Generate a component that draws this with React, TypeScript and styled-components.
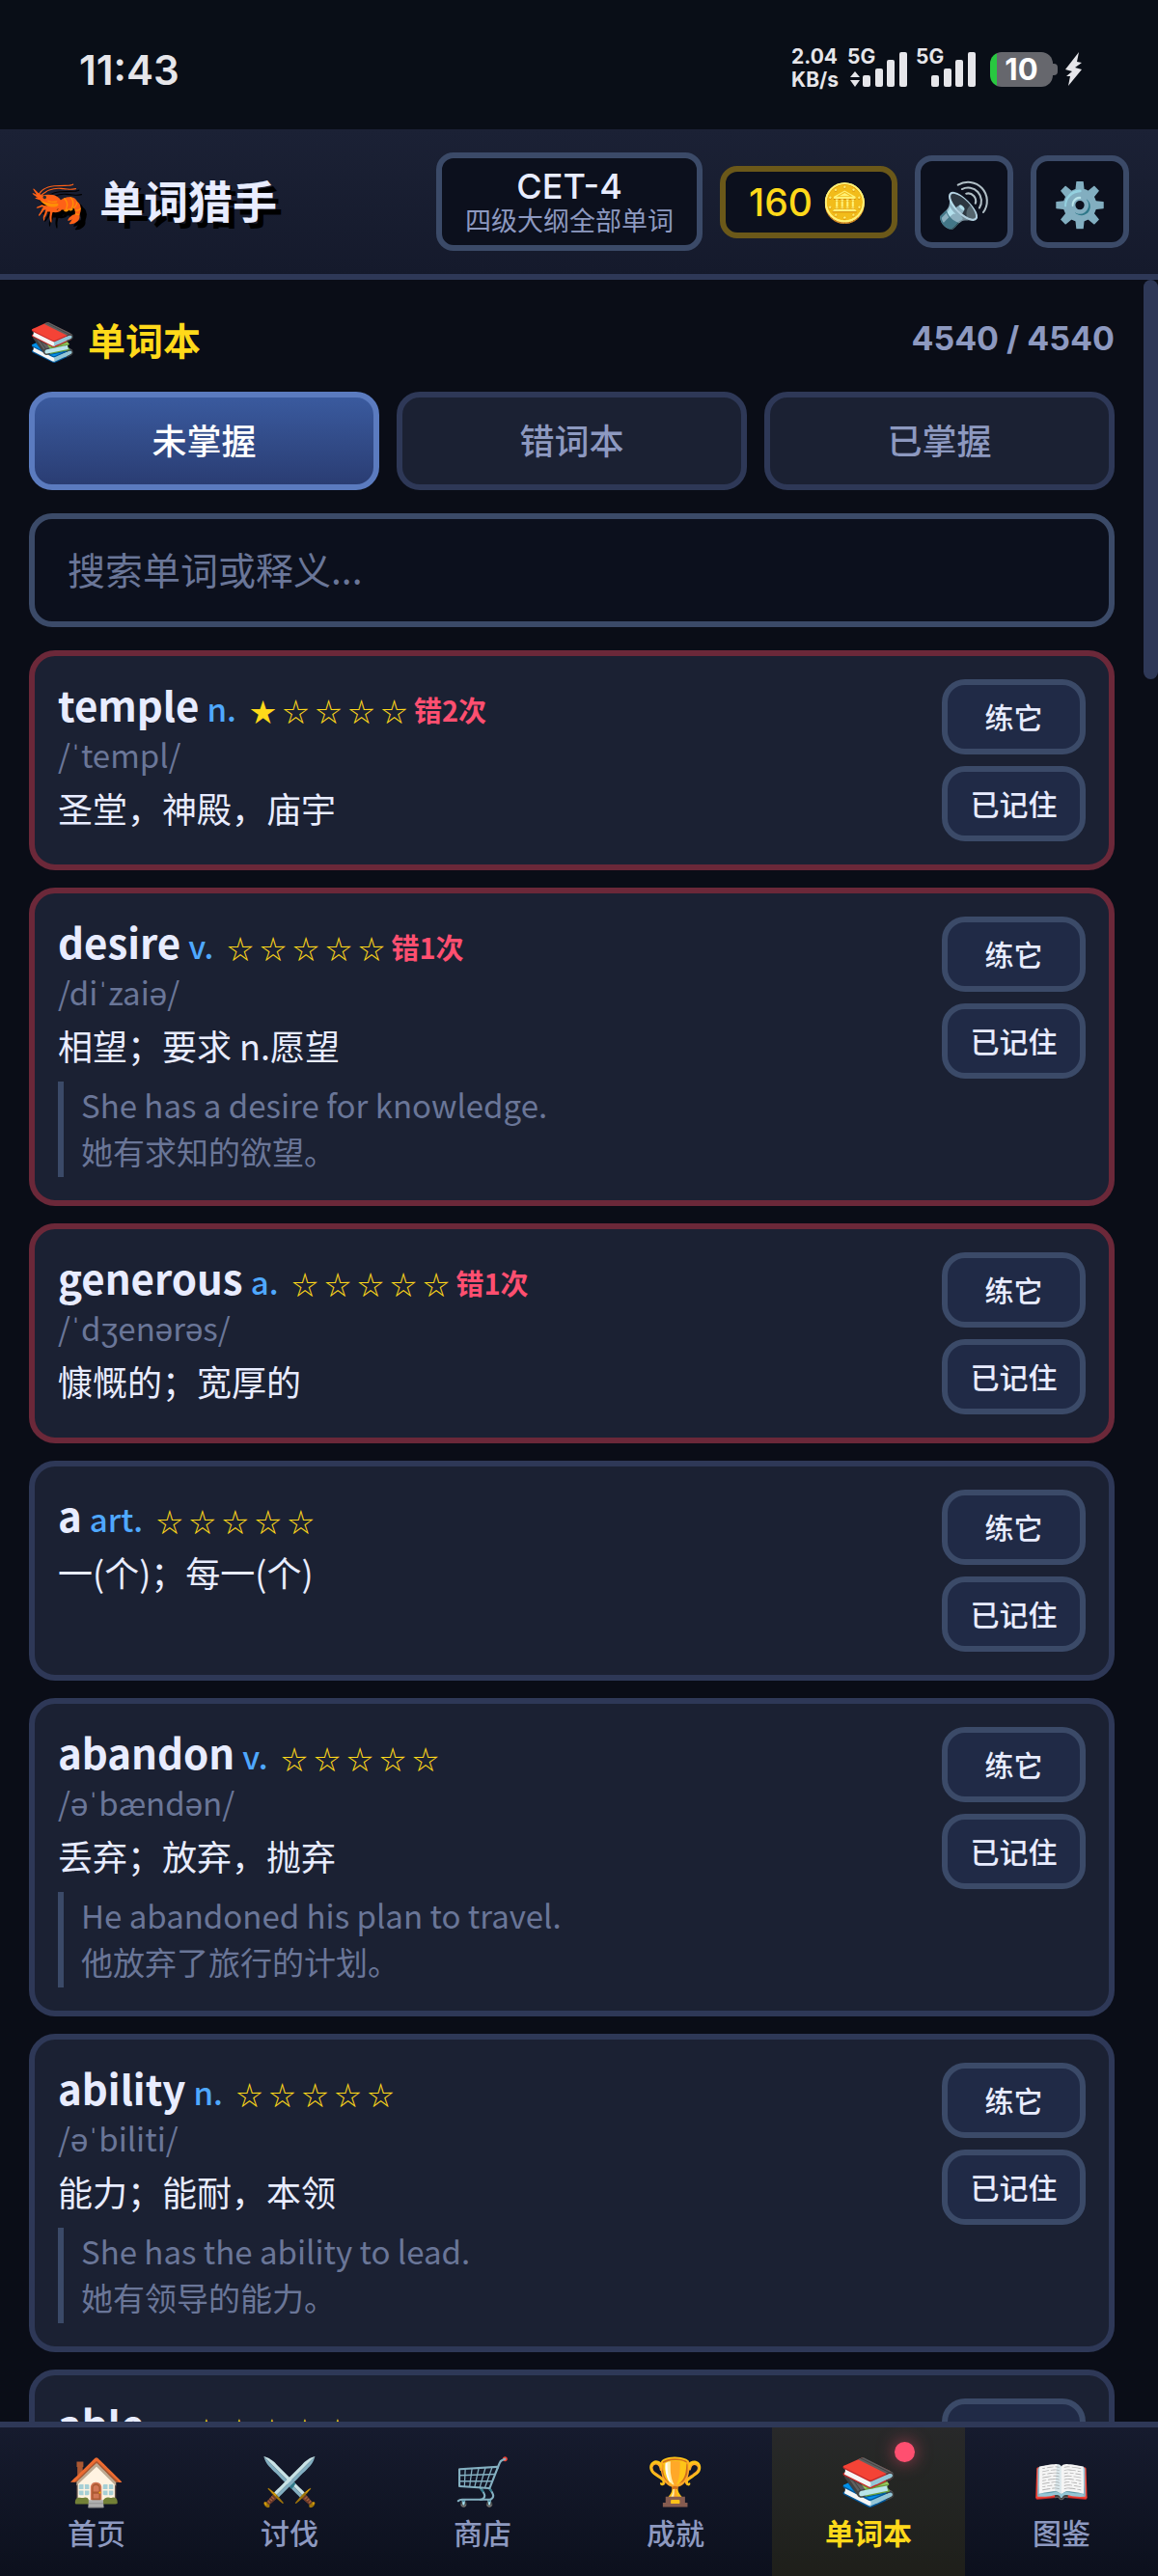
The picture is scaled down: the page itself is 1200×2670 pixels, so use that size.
import React, { useState } from "react";
import { createGlobalStyle, styled } from "styled-components";

interface Word {
  word: string;
  pos: string;
  level: number;
  wrong?: number;
  phonetic?: string;
  meaning?: string;
  example?: string;
  exampleCn?: string;
}

const words: Word[] = [
  {
    word: "temple",
    pos: "n.",
    level: 1,
    wrong: 2,
    phonetic: "/ˈtempl/",
    meaning: "圣堂，神殿，庙宇",
  },
  {
    word: "desire",
    pos: "v.",
    level: 0,
    wrong: 1,
    phonetic: "/diˈzaiə/",
    meaning: "相望；要求 n.愿望",
    example: "She has a desire for knowledge.",
    exampleCn: "她有求知的欲望。",
  },
  {
    word: "generous",
    pos: "a.",
    level: 0,
    wrong: 1,
    phonetic: "/ˈdʒenərəs/",
    meaning: "慷慨的；宽厚的",
  },
  { word: "a", pos: "art.", level: 0, meaning: "一(个)；每一(个)" },
  {
    word: "abandon",
    pos: "v.",
    level: 0,
    phonetic: "/əˈbændən/",
    meaning: "丢弃；放弃，抛弃",
    example: "He abandoned his plan to travel.",
    exampleCn: "他放弃了旅行的计划。",
  },
  {
    word: "ability",
    pos: "n.",
    level: 0,
    phonetic: "/əˈbiliti/",
    meaning: "能力；能耐，本领",
    example: "She has the ability to lead.",
    exampleCn: "她有领导的能力。",
  },
  { word: "able", pos: "a.", level: 0 },
];

const tabs = ["未掌握", "错词本", "已掌握"];

const menus = [
  { icon: "🏠", name: "首页" },
  { icon: "⚔️", name: "讨伐" },
  { icon: "🛒", name: "商店" },
  { icon: "🏆", name: "成就" },
  { icon: "📚", name: "单词本", dot: true },
  { icon: "📖", name: "图鉴" },
];

const SignalBars = () => (
  <svg width="46" height="36" viewBox="0 0 46 36" fill="#e6e6ea">
    <rect x="0" y="24" width="8" height="12" rx="2" />
    <rect x="13" y="17" width="8" height="19" rx="2" />
    <rect x="25" y="8" width="8" height="28" rx="2" />
    <rect x="38" y="0" width="8" height="36" rx="2" />
  </svg>
);

const WordCard: React.FC<{ item: Word }> = ({ item }) => {
  return (
    <Card $wrong={!!item.wrong}>
      <WordInfo>
        <WordLine>
          <WordText>{item.word}</WordText>
          <Pos>{item.pos}</Pos>
          <Stars>
            {[1, 2, 3, 4, 5].map((n) => (
              <span key={n}>{n <= item.level ? "★" : "☆"}</span>
            ))}
          </Stars>
          {item.wrong && <WrongCount>错{item.wrong}次</WrongCount>}
        </WordLine>
        {item.phonetic && <Phonetic>{item.phonetic}</Phonetic>}
        {item.meaning && <Meaning>{item.meaning}</Meaning>}
        {item.example && (
          <Example>
            <p>{item.example}</p>
            <p>{item.exampleCn}</p>
          </Example>
        )}
      </WordInfo>
      <CardActions>
        <ActionBt>练它</ActionBt>
        <ActionBt>已记住</ActionBt>
      </CardActions>
    </Card>
  );
};

const App: React.FC = () => {
  const [tab, setTab] = useState<string>("未掌握");
  const [menu, setMenu] = useState<string>("单词本");
  const [keyword, setKeyword] = useState<string>("");

  return (
    <Screen>
      <GlobalStyle />
      <StatusBar>
        <Time>11:43</Time>
        <StatusIcons>
          <NetSpeed>
            <span>2.04</span>
            <span>KB/s</span>
          </NetSpeed>
          <Signal>
            <SignalLabel>5G</SignalLabel>
            <svg width="10" height="16" viewBox="0 0 10 16" fill="#e6e6ea">
              <path d="M5 0 L10 6 H0 Z M5 16 L0 9 H10 Z" />
            </svg>
            <SignalBars />
          </Signal>
          <Signal>
            <SignalLabel>5G</SignalLabel>
            <SignalBars />
          </Signal>
          <Battery>10</Battery>
          <svg width="18" height="36" viewBox="0 0 18 36" fill="#e6e6ea">
            <path d="M14 0 L0 18 L7 20 L1 25 H5 L3 35 L17 18 L10 16 L17 11 L12 10 Z" />
          </svg>
        </StatusIcons>
      </StatusBar>

      <Header>
        <Title>
          <span>🦐</span>
          <span>单词猎手</span>
        </Title>
        <BookBt>
          <BookName>CET-4</BookName>
          <BookDesc>四级大纲全部单词</BookDesc>
        </BookBt>
        <Coin>
          <span>160</span>
          <span>🪙</span>
        </Coin>
        <IconBt aria-label="声音">🔊</IconBt>
        <IconBt aria-label="设置">⚙️</IconBt>
      </Header>

      <Body>
        <Main>
          <Heading>
            <HeadingTitle>
              <span>📚</span>
              <span>单词本</span>
            </HeadingTitle>
            <Count>4540 / 4540</Count>
          </Heading>
          <TabList>
            {tabs.map((name) => (
              <TabBt
                key={name}
                $active={tab === name}
                onClick={() => setTab(name)}
              >
                {name}
              </TabBt>
            ))}
          </TabList>
          <SearchInput
            type="text"
            aria-label="搜索单词或释义"
            placeholder="搜索单词或释义..."
            value={keyword}
            onChange={(e) => setKeyword(e.target.value)}
          />
          <CardList>
            {words.map((item) => (
              <WordCard key={item.word} item={item} />
            ))}
          </CardList>
        </Main>
        <ScrollTrack>
          <ScrollThumb />
        </ScrollTrack>
      </Body>

      <Nav>
        {menus.map(({ icon, name, dot }) => (
          <NavBt key={name} $active={menu === name} onClick={() => setMenu(name)}>
            <NavIcon>{icon}</NavIcon>
            <span>{name}</span>
            {dot && <Dot />}
          </NavBt>
        ))}
      </Nav>
    </Screen>
  );
};

const GlobalStyle = createGlobalStyle`
  * {
    box-sizing: border-box;
    margin: 0;
    padding: 0;
  }
  body {
    background: #0a0d17;
    color: #e8ecff;
    font-family: "Noto Sans CJK SC", sans-serif;
  }
  button,
  input {
    font-family: inherit;
    color: inherit;
  }
  button {
    cursor: pointer;
  }
`;

const Screen = styled.div`
  display: flex;
  flex-direction: column;
  height: 100vh;
`;

const StatusBar = styled.div`
  display: flex;
  align-items: center;
  justify-content: space-between;
  height: 134px;
  padding: 10px 78px 0 82px;
  background: #090e17;
  color: #e6e6ea;
  font-family: "Inter", sans-serif;
  flex-shrink: 0;
`;

const Time = styled.span`
  font-size: 42px;
  font-weight: 600;
`;

const StatusIcons = styled.div`
  display: flex;
  align-items: center;
  gap: 9px;
`;

const NetSpeed = styled.div`
  display: flex;
  flex-direction: column;
  padding-bottom: 2px;
  font-size: 21px;
  font-weight: 700;
  line-height: 24px;
`;

const Signal = styled.div`
  position: relative;
  display: flex;
  align-items: flex-end;
  justify-content: flex-end;
  gap: 3px;
  width: 62px;
  height: 36px;
`;

const SignalLabel = styled.span`
  position: absolute;
  top: -7px;
  left: 0;
  font-size: 21px;
  font-weight: 700;
  line-height: 24px;
`;

const Battery = styled.div`
  position: relative;
  width: 65px;
  height: 36px;
  margin: 0 4px 0 6px;
  border-radius: 12px;
  background: linear-gradient(90deg, #28c840 7px, #66676d 7px);
  color: #fff;
  font-size: 31px;
  font-weight: 700;
  line-height: 36px;
  text-align: center;

  &::after {
    content: "";
    position: absolute;
    top: 12px;
    right: -5px;
    width: 5px;
    height: 12px;
    border-radius: 0 4px 4px 0;
    background: #66676d;
  }
`;

const Header = styled.header`
  display: flex;
  align-items: center;
  gap: 18px;
  height: 156px;
  padding: 0 30px;
  border-bottom: 6px solid #2e3857;
  background: linear-gradient(180deg, #1b2135, #151a2c);
  flex-shrink: 0;
`;

const Title = styled.h1`
  display: flex;
  gap: 16px;
  flex: 1;
  padding-bottom: 6px;
  font-size: 46px;
  font-weight: 700;
  line-height: 60px;
  text-shadow: 6px 6px 0 #000;
`;

const BookBt = styled.button`
  display: flex;
  flex-direction: column;
  align-items: center;
  padding: 6px 24px 14px;
  border: 6px solid #3b4a68;
  border-radius: 18px;
  background: #0c101d;
`;

const BookName = styled.span`
  font-family: "Inter", sans-serif;
  font-size: 36px;
  font-weight: 500;
  line-height: 46px;
`;

const BookDesc = styled.span`
  color: #8d99c0;
  font-size: 27px;
  line-height: 24px;
`;

const Coin = styled.div`
  display: flex;
  align-items: center;
  gap: 9px;
  padding: 6px 24px;
  border: 6px solid #6b5819;
  border-radius: 18px;
  background: #0c101d;
  color: #ffd91a;
  font-family: "Inter", sans-serif;
  font-size: 39px;
  font-weight: 500;
  line-height: 51px;
`;

const IconBt = styled.button`
  width: 102px;
  height: 96px;
  border: 6px solid #3b4a68;
  border-radius: 18px;
  background: #0c101d;
  font-size: 45px;
  line-height: 60px;
`;

const Body = styled.div`
  display: flex;
  flex: 1;
  min-height: 0;
`;

const Main = styled.main`
  display: flex;
  flex-direction: column;
  gap: 24px;
  flex: 1;
  padding: 30px;
  overflow-y: auto;
  scrollbar-width: none;
`;

const Heading = styled.div`
  display: flex;
  align-items: center;
  justify-content: space-between;
  line-height: 62px;
`;

const HeadingTitle = styled.h2`
  display: flex;
  gap: 12px;
  color: #ffd91a;
  font-size: 39px;
  font-weight: 700;
`;

const Count = styled.span`
  color: #8d99c0;
  font-family: "Inter", sans-serif;
  font-size: 34px;
  font-weight: 700;
`;

const TabList = styled.div`
  display: grid;
  grid-template-columns: repeat(3, 1fr);
  gap: 18px;
`;

const TabBt = styled.button<{ $active: boolean }>`
  height: 102px;
  padding-bottom: 5px;
  border: 6px solid ${({ $active }) => ($active ? "#5b7bbf" : "#2e3857")};
  border-radius: 24px;
  background: ${({ $active }) =>
    $active ? "linear-gradient(180deg, #3a5a9e, #2a3d73)" : "#1b2133"};
  color: ${({ $active }) => ($active ? "#fff" : "#8d99c0")};
  font-size: 36px;
  font-weight: 500;
`;

const SearchInput = styled.input`
  width: 100%;
  height: 118px;
  padding: 0 34px 4px;
  border: 6px solid #3b4a68;
  border-radius: 24px;
  background: #0c101d;
  font-size: 39px;
  flex-shrink: 0;

  &::placeholder {
    color: #6a7698;
    opacity: 1;
  }
`;

const CardList = styled.ul`
  display: flex;
  flex-direction: column;
  gap: 18px;
  list-style: none;
`;

const Card = styled.li<{ $wrong: boolean }>`
  display: flex;
  align-items: flex-start;
  gap: 24px;
  padding: 24px;
  border: 6px solid ${({ $wrong }) => ($wrong ? "#6b2839" : "#2e3857")};
  border-radius: 27px;
  background: #1b2133;
`;

const WordInfo = styled.div`
  flex: 1;
`;

const WordLine = styled.div`
  display: flex;
  align-items: baseline;
  height: 52px;
  line-height: 52px;
`;

const WordText = styled.strong`
  margin-right: 8px;
  font-size: 42px;
  font-weight: 700;
`;

const Pos = styled.span`
  margin-right: 14px;
  color: #4fa8ff;
  font-size: 33px;
  font-weight: 500;
`;

const Stars = styled.span`
  display: flex;
  gap: 7px;
  margin-right: 7px;
  color: #ffd91a;
  font-size: 27px;
`;

const WrongCount = styled.span`
  color: #ff4f70;
  font-size: 29px;
  font-weight: 700;
`;

const Phonetic = styled.p`
  margin-top: 4px;
  color: #6a7698;
  font-size: 33px;
  line-height: 44px;
`;

const Meaning = styled.p`
  margin-top: 8px;
  font-size: 36px;
  line-height: 50px;
`;

const Example = styled.div`
  margin-top: 13px;
  padding: 0 0 3px 18px;
  border-left: 6px solid #3b4a68;
  color: #6a7698;
  font-size: 33px;
  line-height: 48px;
`;

const CardActions = styled.div`
  display: flex;
  flex-direction: column;
  gap: 12px;
`;

const ActionBt = styled.button`
  width: 149px;
  height: 78px;
  padding-bottom: 3px;
  border: 6px solid #3b4a68;
  border-radius: 24px;
  background: #202a46;
  font-size: 30px;
  font-weight: 500;
`;

const ScrollTrack = styled.div`
  width: 15px;
  flex-shrink: 0;
`;

const ScrollThumb = styled.div`
  height: 414px;
  border-radius: 8px;
  background: #2e3857;
`;

const Nav = styled.nav`
  display: grid;
  grid-template-columns: repeat(6, 1fr);
  border-top: 6px solid #2e3857;
  background: linear-gradient(180deg, #161b2e, #0c101d);
  flex-shrink: 0;
`;

const NavBt = styled.button<{ $active: boolean }>`
  position: relative;
  display: flex;
  flex-direction: column;
  align-items: center;
  gap: 6px;
  padding: 24px 0;
  border: none;
  background: ${({ $active }) =>
    $active ? "rgba(255, 215, 0, 0.08)" : "transparent"};
  color: ${({ $active }) => ($active ? "#ffd91a" : "#8d99c0")};
  font-size: 30px;
  font-weight: ${({ $active }) => ($active ? 700 : 500)};
  line-height: 44px;
`;

const NavIcon = styled.span`
  font-size: 48px;
  line-height: 56px;
`;

const Dot = styled.span`
  position: absolute;
  top: 15px;
  right: 52px;
  width: 21px;
  height: 21px;
  border-radius: 50%;
  background: #ff4f70;
  box-shadow: 0 0 18px rgba(255, 79, 112, 0.6);
`;

export default App;
